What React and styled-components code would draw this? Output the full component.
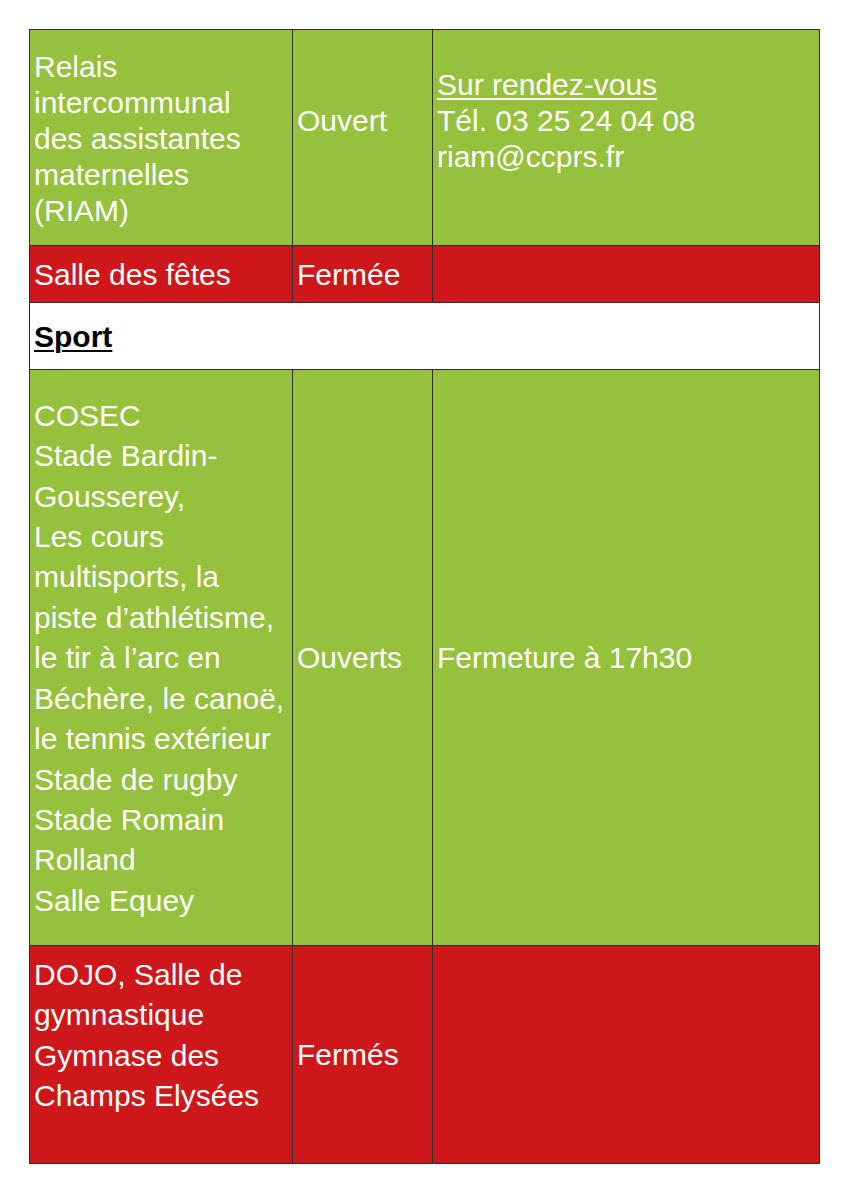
import React from "react";
import styled, { createGlobalStyle } from "styled-components";

const GREEN = "#95c13d";
const RED = "#cd171a";
const LINE = "#2e2e2e";

const Global = createGlobalStyle`
  html, body { margin: 0; padding: 0; background: #ffffff; }
  body { font-family: "Liberation Sans", Arial, sans-serif; }
`;

const Page = styled.div`
  padding: 29px 0 29px 29px;
`;

const Table = styled.div`
  width: 791px;
  box-sizing: border-box;
  border-left: 1px solid ${LINE};
  border-top: 1px solid ${LINE};
  display: flex;
  flex-direction: column;
`;

const Row = styled.div`
  display: grid;
  grid-template-columns: 263px 140px 387px;
  height: ${(p) => p.$h}px;
  background: ${(p) => p.$bg};
`;

const Cell = styled.div`
  box-sizing: border-box;
  border-right: 1px solid ${LINE};
  border-bottom: 1px solid ${LINE};
  display: flex;
  flex-direction: column;
  justify-content: center;
  padding: 2px 0 ${(p) => p.$trail || 0}px 4px;
  color: #ffffff;
  font-size: 30px;
  line-height: ${(p) => p.$lh || 36}px;
  white-space: nowrap;
`;

const Line = styled.span`
  display: block;
`;

const Link = styled.span`
  display: block;
  text-decoration: underline;
  text-decoration-thickness: 2px;
  text-underline-offset: 3px;
`;

const SectionRow = styled.div`
  box-sizing: border-box;
  height: ${(p) => p.$h}px;
  background: #ffffff;
  border-right: 1px solid ${LINE};
  border-bottom: 1px solid ${LINE};
  display: flex;
  align-items: center;
  padding: 2px 0 0 4px;
`;

const SectionTitle = styled.span`
  font-size: 30px;
  font-weight: bold;
  color: #000000;
  text-decoration: underline;
  text-decoration-thickness: 2px;
  text-underline-offset: 3px;
`;

const Lines = ({ items }) => items.map((t, i) => <Line key={i}>{t}</Line>);

export default function App() {
  return (
    <>
      <Global />
      <Page>
        <Table>
          <Row $h={216} $bg={GREEN}>
            <Cell $lh={36}>
              <Lines
                items={[
                  "Relais",
                  "intercommunal",
                  "des assistantes",
                  "maternelles",
                  "(RIAM)",
                ]}
              />
            </Cell>
            <Cell $lh={36} $trail={36}>
              <Line>Ouvert</Line>
            </Cell>
            <Cell $lh={36} $trail={36}>
              <Link>Sur rendez-vous</Link>
              <Line>Tél. 03 25 24 04 08</Line>
              <Line>riam@ccprs.fr</Line>
            </Cell>
          </Row>
          <Row $h={57} $bg={RED}>
            <Cell>
              <Line>Salle des fêtes</Line>
            </Cell>
            <Cell>
              <Line>Fermée</Line>
            </Cell>
            <Cell />
          </Row>
          <SectionRow $h={67}>
            <SectionTitle>Sport</SectionTitle>
          </SectionRow>
          <Row $h={576} $bg={GREEN}>
            <Cell $lh={40.4}>
              <Lines
                items={[
                  "COSEC",
                  "Stade Bardin-",
                  "Gousserey,",
                  "Les cours",
                  "multisports, la",
                  "piste d’athlétisme,",
                  "le tir à l’arc en",
                  "Béchère, le canoë,",
                  "le tennis extérieur",
                  "Stade de rugby",
                  "Stade Romain",
                  "Rolland",
                  "Salle Equey",
                ]}
              />
            </Cell>
            <Cell $lh={40.4}>
              <Line>Ouverts</Line>
            </Cell>
            <Cell $lh={40.4}>
              <Line>Fermeture à 17h30</Line>
            </Cell>
          </Row>
          <Row $h={218} $bg={RED}>
            <Cell $lh={40.4} $trail={40}>
              <Lines
                items={[
                  "DOJO, Salle de",
                  "gymnastique",
                  "Gymnase des",
                  "Champs Elysées",
                ]}
              />
            </Cell>
            <Cell $lh={40.4}>
              <Line>Fermés</Line>
            </Cell>
            <Cell />
          </Row>
        </Table>
      </Page>
    </>
  );
}
